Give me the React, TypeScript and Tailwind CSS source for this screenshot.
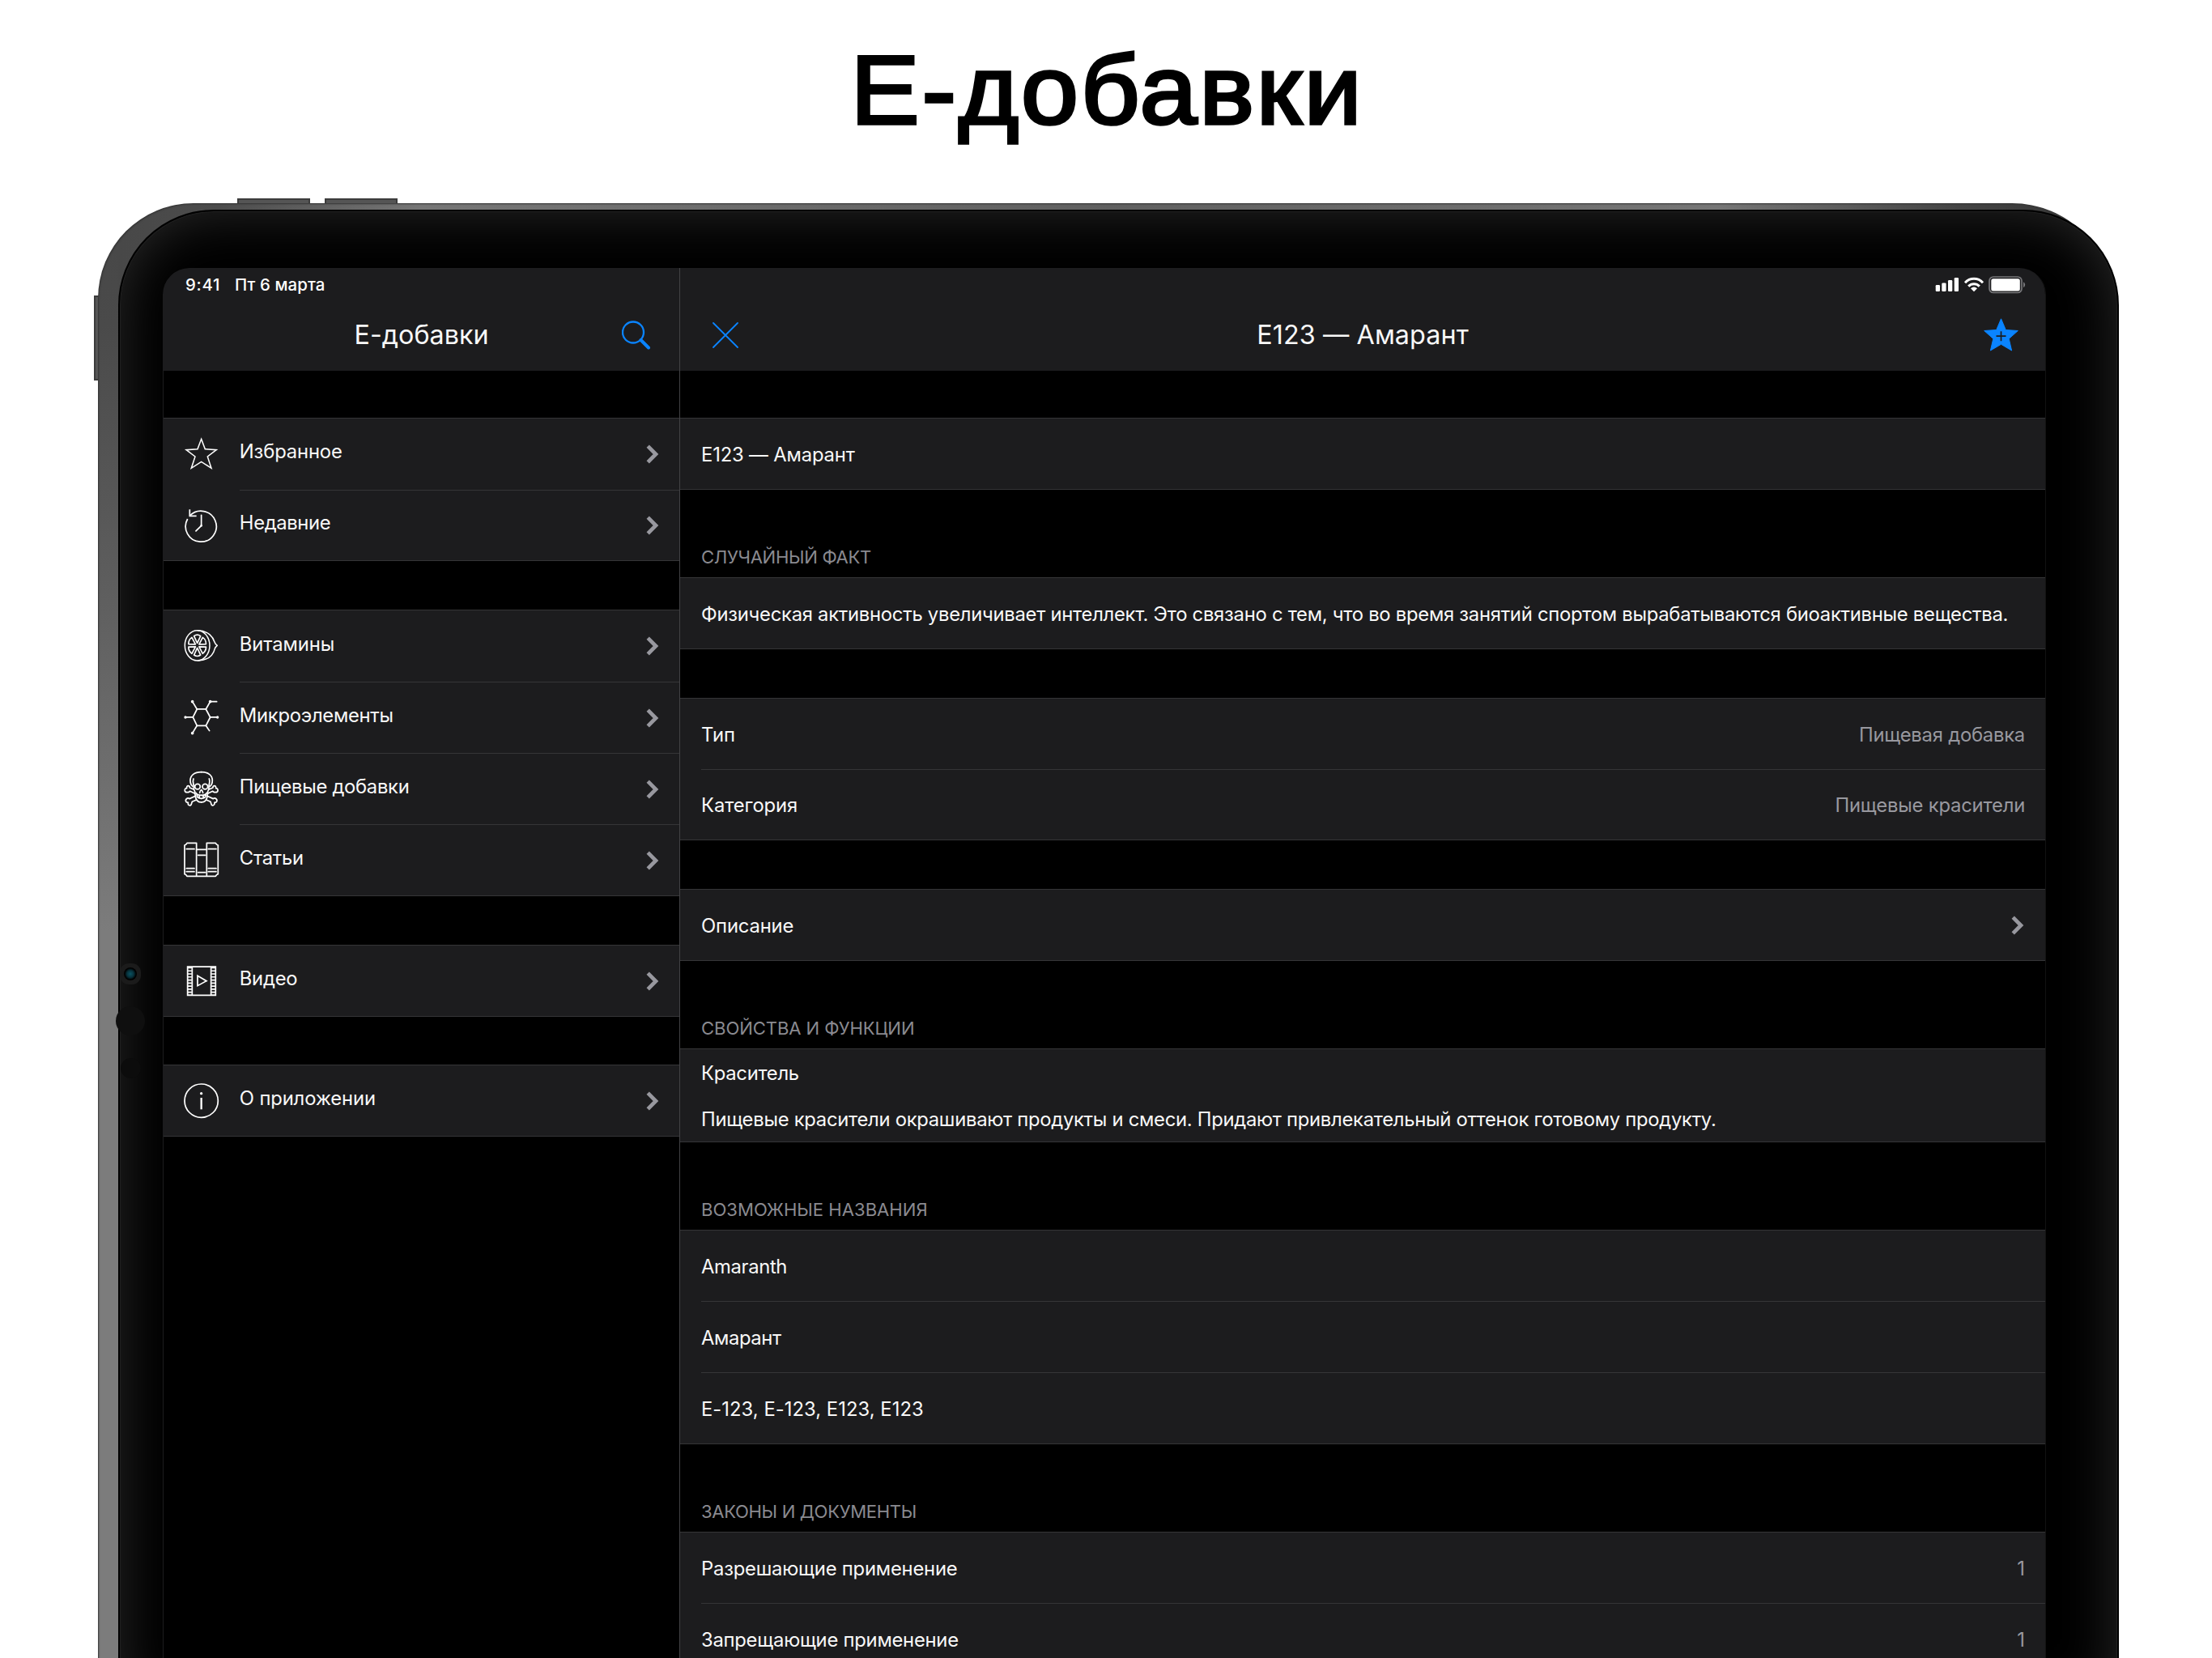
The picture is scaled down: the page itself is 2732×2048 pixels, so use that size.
import type { ReactNode } from "react";

type MenuItem = { label: string; icon: ReactNode; tracking: string };
type MenuGroup = { box: string; items: MenuItem[] };

type Row = {
  label: string;
  tracking: string;
  value?: string;
  valueTracking?: string;
  chevron?: boolean;
};
type Section = { title?: string; titleTracking?: string; box: string; rows: Row[] };

function Icon({ children }: { children: ReactNode }) {
  return (
    <svg
      viewBox="0 0 130 130"
      fill="none"
      stroke="currentColor"
      strokeWidth={5.2}
      strokeLinecap="round"
      strokeLinejoin="round"
      className="h-[43.3px] w-[43.3px] shrink-0 overflow-visible text-white"
    >
      {children}
    </svg>
  );
}

const starIcon = (
  <Icon>
    <path
      strokeLinejoin="miter"
      strokeWidth={4.6}
      d="M65 10 79 47 121 50 88 75 102 118 65 94 28 118 42 75 9 50 51 47Z"
    />
  </Icon>
);

const historyIcon = (
  <Icon>
    <path d="M22 31A57 57 0 1 1 14 42" strokeLinecap="butt" />
    <path d="M22 7V31H47" strokeLinecap="butt" strokeLinejoin="miter" />
    <path d="M65 28V67L45 87" />
    <circle cx="65" cy="67" r="4" fill="currentColor" stroke="none" />
  </Icon>
);

// six slices of the citrus, squeezed horizontally for perspective
const slices = [0, 60, 120, 180, 240, 300].map((deg) => {
  const point = (radius: number, offset: number) => {
    const a = ((deg - 90 + offset) * Math.PI) / 180;
    return `${(50 + radius * 0.86 * Math.cos(a)).toFixed(1)} ${(64 + radius * Math.sin(a)).toFixed(1)}`;
  };
  return `M${point(9, 0)}L${point(38, 22)}Q${point(44, 0)} ${point(38, -22)}Z`;
});

const citrusIcon = (
  <Icon>
    <ellipse cx="50" cy="64" rx="46" ry="56" strokeWidth={4.6} />
    <path
      strokeWidth={4.6}
      d="M52 8C92 9 109 35 114 51Q116 58 124 64Q117 69 115 76C109 100 90 119 52 120"
    />
    {slices.map((d) => (
      <path key={d} d={d} strokeWidth={5} />
    ))}
  </Icon>
);

const moleculeIcon = (
  <Icon>
    <path d="M49 36H82L98 66 82 97H49L34 66Z" />
    <path d="M49 36 32 8M82 36 98 8H122M98 66H124M82 97 95 116M49 97 32 125M34 66H6" />
    <g fill="currentColor" stroke="none">
      <circle cx="32" cy="8" r="5.5" />
      <circle cx="98" cy="8" r="5.5" />
      <circle cx="125" cy="66" r="5" />
      <circle cx="32" cy="125" r="5.5" />
      <circle cx="6" cy="66" r="5" />
    </g>
  </Icon>
);

const skullHalf = (
  <>
    <path d="M65 5C38 5 24 18 24 36C24 46 28 54 33 58" />
    <path d="M36 30C31 42 38 50 37 62C36 72 40 70 41 78L43 96Q47 117 65 117" />
    <circle cx="51" cy="59" r="10" />
    <path d="M65 71Q60 75 59 82" />
    <path d="M45 82C47 88 54 91 65 91M48 87C48 99 54 103 65 103M58 91V102" />
    <path d="M36 69 22 63C23 53 9 53 11 65C0 65 2 81 13 80C17 81 20 78 23 76L40 84" />
    <path d="M43 94 21 104C14 98 3 107 9 116C11 119 14 117 16 118C14 130 26 132 28 124L31 115 47 108" />
  </>
);

const skullIcon = (
  <Icon>
    {skullHalf}
    <g transform="translate(130 0) scale(-1 1)">{skullHalf}</g>
  </Icon>
);

const booksIcon = (
  <Icon>
    <path d="M47 4H12Q9 10 3 12V119Q9 121 12 127H118Q121 121 127 119V12Q121 10 118 4H85V127M47 4V127" />
    <path d="M10 26H39M10 98H39M10 110H39M91 26H120M91 98H120M91 110H120M47 28H85M53 49H80M53 113H80" />
  </Icon>
);

const filmIcon = (
  <Icon>
    <g strokeLinecap="butt" strokeLinejoin="miter">
      <path d="M14 12.500H118V118H14ZM31 12V118M101 12V118" />
      <path d="M22 14V118M110 14V118" strokeWidth={15} strokeDasharray="5 6.300" />
      <path d="M51 46V83L84 65Z" />
    </g>
  </Icon>
);

const infoIcon = (
  <Icon>
    <circle cx="65" cy="65" r="62" />
    <path d="M65 54V97" strokeWidth={7} strokeLinecap="butt" />
    <circle cx="65" cy="38" r="5" fill="currentColor" stroke="none" />
  </Icon>
);

const menu: MenuGroup[] = [
  {
    box: "mt-[58px] h-[177px]",
    items: [
      { label: "Избранное", icon: starIcon, tracking: "tracking-[-0.15px]" },
      { label: "Недавние", icon: historyIcon, tracking: "tracking-[-0.35px]" },
    ],
  },
  {
    box: "mt-[60px] h-[354px]",
    items: [
      { label: "Витамины", icon: citrusIcon, tracking: "tracking-[-0.08px]" },
      { label: "Микроэлементы", icon: moleculeIcon, tracking: "tracking-[-0.28px]" },
      { label: "Пищевые добавки", icon: skullIcon, tracking: "tracking-[-0.28px]" },
      { label: "Статьи", icon: booksIcon, tracking: "tracking-[-0.28px]" },
    ],
  },
  {
    box: "mt-[60px] h-[89px]",
    items: [{ label: "Видео", icon: filmIcon, tracking: "tracking-[-0.25px]" }],
  },
  {
    box: "mt-[59px] h-[89px]",
    items: [{ label: "О приложении", icon: infoIcon, tracking: "tracking-[-0.14px]" }],
  },
];

const sections: Section[] = [
  {
    box: "mt-[58px] h-[89px]",
    rows: [{ label: "E123 — Амарант", tracking: "tracking-[-0.16px]" }],
  },
  {
    title: "СЛУЧАЙНЫЙ ФАКТ",
    titleTracking: "tracking-[-0.33px]",
    box: "h-[89px]",
    rows: [
      {
        label:
          "Физическая активность увеличивает интеллект. Это связано с тем, что во время занятий спортом вырабатываются биоактивные вещества.",
        tracking: "tracking-[-0.26px]",
      },
    ],
  },
  {
    box: "mt-[60px] h-[176px]",
    rows: [
      {
        label: "Тип",
        tracking: "tracking-[-0.1px]",
        value: "Пищевая добавка",
        valueTracking: "tracking-[-0.22px]",
      },
      {
        label: "Категория",
        tracking: "tracking-[-0.1px]",
        value: "Пищевые красители",
        valueTracking: "tracking-[-0.2px]",
      },
    ],
  },
  {
    box: "mt-[60px] h-[89px]",
    rows: [{ label: "Описание", tracking: "tracking-[-0.15px]", chevron: true }],
  },
  {
    title: "СВОЙСТВА И ФУНКЦИИ",
    titleTracking: "tracking-[-0.1px]",
    box: "h-[116px]",
    rows: [
      {
        label:
          "Краситель\n\nПищевые красители окрашивают продукты и смеси. Придают привлекательный оттенок готовому продукту.",
        tracking: "tracking-[-0.275px]",
      },
    ],
  },
  {
    title: "ВОЗМОЖНЫЕ НАЗВАНИЯ",
    titleTracking: "tracking-[0px]",
    box: "h-[265px]",
    rows: [
      { label: "Amaranth", tracking: "tracking-[-0.35px]" },
      { label: "Амарант", tracking: "tracking-[-0.4px]" },
      { label: "Е-123, E-123, E123, Е123", tracking: "tracking-[0.04px]" },
    ],
  },
  {
    title: "ЗАКОНЫ И ДОКУМЕНТЫ",
    titleTracking: "tracking-[-0.34px]",
    box: "h-[177px]",
    rows: [
      { label: "Разрешающие применение", tracking: "tracking-[-0.21px]", value: "1" },
      { label: "Запрещающие применение", tracking: "tracking-[-0.25px]", value: "1" },
    ],
  },
];

function Chevron() {
  return (
    <svg
      viewBox="0 0 15 22"
      fill="none"
      stroke="#98989f"
      strokeWidth={4.7}
      className="h-[22px] w-[15px] shrink-0 overflow-visible"
    >
      <path d="M1.200 1.200 11 11 1.200 20.800" />
    </svg>
  );
}

function Sidebar() {
  return (
    <aside className="flex w-[638px] shrink-0 flex-col border-l border-[#1c1c1e]">
      <header className="h-[127px] shrink-0 bg-[#1c1c1e]">
        <div className="flex h-[39px] items-center pt-[3px] pl-[27px] text-[20.4px] font-medium text-white">
          <span className="w-[61px] tracking-[0.7px]">9:41</span>
          <span className="tracking-[0.1px]">Пт 6 марта</span>
        </div>
        <div className="grid h-[86px] grid-cols-[1fr_auto_1fr] items-center">
          <span />
          <h2 className="pt-[3px] text-[32.3px] leading-none">Е-добавки</h2>
          <svg
            viewBox="0 0 36 36"
            fill="none"
            stroke="#0a84ff"
            className="mt-[2px] mr-[35px] h-[36px] w-[36px] justify-self-end"
          >
            <circle cx="14" cy="14.500" r="13" strokeWidth={2.3} />
            <path d="M23.500 24 33 33.500" strokeWidth={4} strokeLinecap="round" />
          </svg>
        </div>
      </header>

      {menu.map((group) => (
        <nav
          key={group.items[0].label}
          className={`${group.box} flex shrink-0 flex-col border-y border-[#353537] bg-[#1c1c1e]`}
        >
          {group.items.map((item, i) => (
            <div key={item.label} className="flex flex-1 items-center pl-[25px]">
              {item.icon}
              <div
                className={`ml-[25.500px] flex h-full flex-1 items-center justify-between pr-[25px] ${
                  i > 0 ? "border-t border-[#353537]" : ""
                }`}
              >
                <span className={`pb-[5px] text-[23.8px] leading-none ${item.tracking}`}>
                  {item.label}
                </span>
                <Chevron />
              </div>
            </div>
          ))}
        </nav>
      ))}
    </aside>
  );
}

function StatusIcons() {
  return (
    <svg viewBox="0 0 112 24" className="h-[24px] w-[112px]" fill="#fff">
      <rect x="0.700" y="12" width="5.300" height="8" rx="1.300" />
      <rect x="8.300" y="9.500" width="5.300" height="10.500" rx="1.300" />
      <rect x="16" y="6" width="5.300" height="14" rx="1.300" />
      <rect x="23.700" y="3" width="5.300" height="17" rx="1.300" />
      <g fill="none" stroke="#fff" strokeWidth={3}>
        <path d="M37 9.300C43 2.700 53 2.700 59 9.300" />
        <path d="M41.200 13.600C45 9.700 51 9.700 54.800 13.600" />
      </g>
      <path d="M44 16.200Q48 13 52 16.200L48 20.200Z" />
      <rect x="67" y="2" width="40" height="19.500" rx="5" fill="none" stroke="#77777a" strokeWidth={1.700} />
      <rect x="69.300" y="4.200" width="35.500" height="15.200" rx="2.500" />
      <path d="M109 8.300Q111.200 9.500 111.200 11.700T109 15.200Z" fill="#77777a" />
    </svg>
  );
}

function Detail() {
  return (
    <main className="flex flex-1 flex-col border-l border-[#424245]">
      <header className="h-[127px] shrink-0 bg-[#1c1c1e]">
        <div className="flex h-[39px] items-center justify-end pt-[2px] pr-[24px]">
          <StatusIcons />
        </div>
        <div className="grid h-[86px] grid-cols-[1fr_auto_1fr] items-center">
          <svg
            viewBox="0 0 32 32"
            stroke="#0a84ff"
            strokeWidth={1.8}
            strokeLinecap="round"
            className="mt-px ml-[40px] h-[32px] w-[32px]"
          >
            <path d="M1 1 31 31M31 1 1 31" />
          </svg>
          <h2 className="pt-[3px] text-[32.3px] leading-none tracking-[0.1px]">E123 — Амарант</h2>
          <svg
            viewBox="0 0 43 41"
            className="mr-[33px] h-[41px] w-[43px] justify-self-end"
            strokeLinejoin="round"
          >
            <path
              fill="#0a84ff"
              stroke="#0a84ff"
              d="M21.500 0.800 27.300 14.500 42.300 15.500 31.200 25.400 34.600 40 21.500 32.300 8.400 40 11.800 25.400 0.700 15.500 15.700 14.500Z"
            />
            <path d="M21.500 16.200V28.200M15.500 22.200H27.500" stroke="#1c1c1e" strokeWidth={1.700} />
          </svg>
        </div>
      </header>

      {sections.map((section) => (
        <section key={section.rows[0].label} className="shrink-0">
          {section.title && (
            <h3
              className={`flex h-[108px] items-end pb-[14px] pl-[26px] text-[22.1px] leading-none text-[#8a8a90] ${section.titleTracking}`}
            >
              {section.title}
            </h3>
          )}
          <div className={`${section.box} flex flex-col border-y border-[#353537] bg-[#1c1c1e]`}>
            {section.rows.map((row, i) => (
              <div
                key={row.label}
                className={`ml-[26px] flex flex-1 items-center justify-between pr-[26px] text-[23.8px] leading-[28.2px] ${
                  i > 0 ? "border-t border-[#353537]" : ""
                }`}
              >
                <span className={`pt-[3px] whitespace-pre ${row.tracking}`}>{row.label}</span>
                {row.value && (
                  <span className={`-mr-px pt-[3px] text-[#98989f] ${row.valueTracking ?? ""}`}>
                    {row.value}
                  </span>
                )}
                {row.chevron && <Chevron />}
              </div>
            ))}
          </div>
        </section>
      ))}
    </main>
  );
}

function Camera() {
  return (
    <>
      <span className="absolute top-[929px] left-0 flex h-[26px] w-[26px] items-center justify-center rounded-[11px] bg-[#1b1b1b]">
        <span className="h-[16px] w-[16px] rounded-full bg-[radial-gradient(circle,#0b5262_0%,#06303a_38%,#000_62%)]" />
      </span>
      <span className="absolute top-[982px] left-[-5px] h-[36px] w-[36px] rounded-full bg-[#0f0f0f]" />
      <span className="absolute top-[1046px] left-[1px] h-[25px] w-[25px] rounded-full bg-[#0c0c0c]" />
    </>
  );
}

export default function App() {
  return (
    <div className="flex h-[2048px] w-[2732px] flex-col overflow-hidden bg-white font-['Inter',sans-serif] text-[#f8f8f8]">
      <h1 className="flex h-[251px] shrink-0 items-start justify-center pt-[42px] font-['Liberation_Sans',sans-serif] text-[121px] leading-[138px] text-black">
        <span className="scale-x-[1.055] pl-[2px] tracking-[2.6px] [-webkit-text-stroke:3.6px_#000]">
          Е-добавки
        </span>
      </h1>

      <div className="relative ml-[121px] h-[1860px] w-[2489px] shrink-0">
        {/* hardware buttons */}
        <span className="absolute top-[-6px] left-[172px] h-[8px] w-[90px] border-2 border-[#3c3c3c] bg-[#555]" />
        <span className="absolute top-[-6px] left-[280px] h-[8px] w-[90px] border-2 border-[#3c3c3c] bg-[#555]" />
        <span className="absolute top-[114px] left-[-5px] h-[105px] w-[8px] border-2 border-[#3c3c3c] bg-[#555]" />

        <div className="relative h-full rounded-tl-[118px] rounded-tr-[125px] bg-[linear-gradient(to_bottom,#474747_0,#4a4a4a_150px,#5c5c5c_450px,#7c7c7c_900px,#7c7c7c_100%),linear-gradient(to_right,#474747_0,#4c4c4c_150px,#767676_400px,#606060_1250px,#767676_2000px,#444_2300px,#333_100%)] bg-[length:25px_100%,100%_100%] bg-no-repeat pt-[8px] pl-[25px] shadow-[inset_1px_1px_2px_#333]">
          <div className="relative h-full w-[2471px] rounded-t-[118px] border-2 border-black bg-black pt-[70px] pl-[53px] shadow-[inset_0_0_1px_1px_#222,inset_0_0_70px_0_#2b2b2b]">
            <Camera />
            <div className="flex h-full w-[2326px] overflow-hidden rounded-t-[33px] border-r border-[#121212] bg-black">
              <Sidebar />
              <Detail />
            </div>
          </div>
        </div>
      </div>
    </div>
  );
}
